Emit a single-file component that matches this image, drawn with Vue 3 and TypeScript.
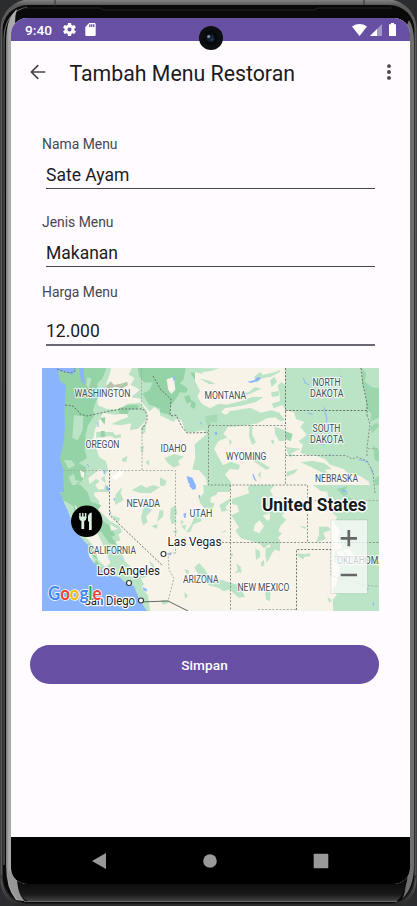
<script setup lang="ts">
import { ref } from 'vue'

interface Field { id: string; label: string; value: string }
interface MapLabel { text: string; x: number; y: number; w: number; kind: string }

const fields = ref<Field[]>([
  { id: 'nama', label: 'Nama Menu', value: 'Sate Ayam' },
  { id: 'jenis', label: 'Jenis Menu', value: 'Makanan' },
  { id: 'harga', label: 'Harga Menu', value: '12.000' },
])

const labels: MapLabel[] = [
  { text: 'WASHINGTON', x: 74.5, y: 397.3, w: 56, kind: 'state' },
  { text: 'OREGON', x: 85.5, y: 447.7, w: 34, kind: 'state' },
  { text: 'IDAHO', x: 160.5, y: 452.3, w: 26, kind: 'state' },
  { text: 'MONTANA', x: 204.5, y: 399.3, w: 41.5, kind: 'state' },
  { text: 'WYOMING', x: 226, y: 460.3, w: 40.5, kind: 'state' },
  { text: 'NORTH', x: 312.5, y: 386.2, w: 28, kind: 'state' },
  { text: 'DAKOTA', x: 310, y: 396.5, w: 33.5, kind: 'state' },
  { text: 'SOUTH', x: 312.5, y: 432.2, w: 28, kind: 'state' },
  { text: 'DAKOTA', x: 310, y: 442.5, w: 33.5, kind: 'state' },
  { text: 'NEBRASKA', x: 315, y: 482.3, w: 43, kind: 'state' },
  { text: 'NEVADA', x: 126.5, y: 507.3, w: 33.5, kind: 'state' },
  { text: 'CALIFORNIA', x: 88.5, y: 553.5, w: 47.5, kind: 'state' },
  { text: 'UTAH', x: 189.5, y: 517.3, w: 23, kind: 'state' },
  { text: 'ARIZONA', x: 183, y: 583.3, w: 35.5, kind: 'state' },
  { text: 'NEW MEXICO', x: 237.5, y: 591.3, w: 52, kind: 'state' },
  { text: 'OKLAHOMA', x: 337, y: 564.3, w: 47, kind: 'state' },
  { text: 'Las Vegas', x: 167.5, y: 546, w: 54, kind: 'city' },
  { text: 'Los Angeles', x: 97, y: 575, w: 63, kind: 'city' },
  { text: 'San Diego', x: 84, y: 605, w: 51, kind: 'city' },
  { text: 'United States', x: 262, y: 510.5, w: 104.5, kind: 'country' },
]
</script>

<template>
  <div class="stage">
    <svg class="device" viewBox="0 0 417 906" aria-hidden="true">
      <defs>
        <linearGradient id="rim" x1="0" y1="0" x2="0" y2="1">
          <stop offset="0" stop-color="#858585" /><stop offset=".006" stop-color="#5a5a5a" />
          <stop offset=".1" stop-color="#5c5c5c" /><stop offset=".97" stop-color="#555" /><stop offset="1" stop-color="#222" />
        </linearGradient>
        <linearGradient id="chin" x1="0" y1="884" x2="0" y2="902" gradientUnits="userSpaceOnUse">
          <stop offset="0" stop-color="#0d0d0d" /><stop offset=".6" stop-color="#1b1b1b" /><stop offset="1" stop-color="#4a4a4a" />
        </linearGradient>
        <linearGradient id="glow" x1="6" y1="0" x2="11" y2="0" gradientUnits="userSpaceOnUse">
          <stop offset="0" stop-color="#777" /><stop offset=".5" stop-color="#a5a5a5" /><stop offset="1" stop-color="#aaa" />
        </linearGradient>
      </defs>
      <rect width="417" height="906" fill="#2b2c2f" />
      <rect x=".5" y="-.5" width="416" height="910" rx="29" fill="url(#rim)" />
      <rect x="2.5" y="5" width="412" height="899" rx="25" fill="#090909" />
      <path d="M4 865V40Q4 12 27 7" fill="none" stroke="#777" stroke-width="1" />
      <path d="M55 0V6M364 0V5" stroke="#333" stroke-width="1" />
      <path d="M22 8H100L104 10H314L318 8H392" fill="none" stroke="#242424" stroke-width="1" />
      <path d="M17 9Q6 18 6 42V866Q6 888 16 900L24 901Q17 895 17 875V42Q13 21 17 9Z" fill="url(#glow)" />
      <path d="M409 20Q414 27 414 42V866Q414 888 402 899Q407 891 405 876V30Z" fill="#6f6f6f" />
      <path d="M13 872H408Q407 892 397 901H28Q15 896 13 872Z" fill="url(#chin)" />
      <path d="M17 875Q17 895 25 901L17 899Q8 889 7 870Z" fill="#969696" />
      <path d="M24 901.5H397" stroke="#686868" stroke-width="1.2" />
      <path d="M1 875Q5 900 25 904H394Q411 900 416 875" fill="none" stroke="#303030" stroke-width="1" />
    </svg>

    <div class="screen">
      <div class="status">
        <span class="clock">9:40</span>
        <svg class="gear" viewBox="2 2 20 20"><path fill="#fff" fill-rule="evenodd" d="M19.43 12.98c.04-.32.07-.64.07-.98s-.03-.66-.07-.98l2.11-1.65c.19-.15.24-.42.12-.64l-2-3.46c-.12-.22-.39-.3-.61-.22l-2.49 1c-.52-.4-1.08-.73-1.69-.98l-.38-2.65A.49.49 0 0014 2h-4c-.25 0-.46.18-.49.42l-.38 2.65c-.61.25-1.17.59-1.69.98l-2.49-1c-.23-.09-.49 0-.61.22l-2 3.46c-.13.22-.07.49.12.64l2.11 1.65c-.04.32-.07.65-.07.98s.03.66.07.98l-2.11 1.65c-.19.15-.24.42-.12.64l2 3.46c.12.22.39.3.61.22l2.49-1c.52.4 1.08.73 1.69.98l.38 2.65c.03.24.24.42.49.42h4c.25 0 .46-.18.49-.42l.38-2.65c.61-.25 1.17-.59 1.69-.98l2.49 1c.23.09.49 0 .61-.22l2-3.46c.12-.22.07-.49-.12-.64l-2.11-1.65zM12 15.2a3.2 3.2 0 110-6.4 3.2 3.2 0 010 6.4z" /></svg>
        <svg class="sd" viewBox="4 2 16 20"><path fill="#fff" fill-rule="evenodd" d="M18 2h-8L4 8v12c0 1.1.9 2 2 2h12c1.1 0 2-.9 2-2V4c0-1.100-.9-2-2-2zm-6 6h-2V4h2v4zm3 0h-2V4h2v4zm3 0h-2V4h2v4z" /></svg>
        <svg class="wifi" viewBox="0 0 15 12"><path d="M0 2.500Q7.500-2.400 15 2.500L7.500 12Z" fill="#fff" /></svg>
        <svg class="signal" viewBox="0 0 12 12"><path d="M12 0V12H0Z" fill="#fff" opacity=".4" /><path d="M7 5V12H0Z" fill="#fff" /></svg>
        <svg class="battery" viewBox="0 0 7 13"><path d="M2 0H5V1.300H7V13H0V1.300H2Z" fill="#fff" /></svg>
      </div>

      <header class="appbar">
        <svg class="back" viewBox="0 0 16 16"><path d="M15.200 8H1.500M8.300 1.100L1.400 8L8.300 14.900" fill="none" stroke="#49454f" stroke-width="1.700" /></svg>
        <h1>Tambah Menu Restoran</h1>
        <svg class="more" viewBox="0 0 4 16"><g fill="#49454f"><circle cx="2" cy="2.100" r="1.950" /><circle cx="2" cy="8" r="1.950" /><circle cx="2" cy="13.900" r="1.950" /></g></svg>
      </header>

      <main class="content">
        <div v-for="field in fields" :key="field.id" class="field" :class="field.id">
          <label :for="field.id">{{ field.label }}</label>
          <input :id="field.id" v-model="field.value" type="text" />
        </div>

        <svg class="map" viewBox="42 368 337 243">
          <rect x="42" y="368" width="337" height="243" fill="#f7f3e8" />
          <!-- Pacific north-west -->
          <g transform="translate(38 362) scale(.33333)">
            <path fill="#bbe3c6" d="M50 18H220L214 40L205 65L210 88L192 98L178 112L180 130L205 140L244 143L268 125L305 122L326 145L325 175L300 200L275 205L280 184L250 190L220 187L245 175L270 166L268 153L230 158L196 152L180 180L170 205L166 232L175 258L183 285L204 298L210 320L200 345L210 390H60Z" />
            <path fill="#94d3a6" d="M53 18H205L194 48L178 65L178 90L193 92L174 116L165 145L170 159L150 190L142 220L140 263L147 288L122 304L145 316L142 345L122 366L100 390H70L65 290Z" />
            <path fill="#bbe3c6" d="M108 160L136 163L134 205L119 235L103 228ZM78 295L100 295L112 310L92 320ZM148 45L160 51L151 82L145 68ZM92 345L108 335L112 354L126 358L105 376Z" />
            <path fill="#f7f3e8" d="M151 348L188 320L202 340L190 348L195 366L175 350L155 366ZM126 324L140 332L138 350L129 343ZM190 113L225 120L250 108L268 113L240 134L206 126Z" />
            <path fill="#bbe3c6" d="M282 18H376V158L350 135L335 148L315 125L307 110L280 105L306 83L278 68L290 48L272 38ZM175 210H224L232 220L249 217L249 226L232 230L218 222L174 227ZM252 290L268 281L265 300L252 298ZM309 195L325 183L322 210L311 220ZM306 255L318 251L314 278ZM322 300L334 294L333 311Z" />
            <path fill="#94d3a6" d="M300 18H376V145L354 135L333 128L314 95L335 83L344 61L320 62L303 42ZM242 139L276 128L302 130L300 141L273 144L269 157L244 155ZM186 169L202 165L200 188L194 180ZM188 207L200 207L201 225L188 226Z" />
            <path fill="#b0c9ac" d="M203 75L218 58L228 69L248 65L268 59L270 69L253 79L230 74L214 82Z" />
          </g>
          <!-- Northern Rockies -->
          <g transform="translate(160 362) scale(.33333)">
            <path fill="#bbe3c6" d="M0 18H115L130 36L105 31L104 55L120 86L112 104L126 126L150 139L177 125L200 128L242 118L277 105L310 105L288 120L243 131L194 139L184 150L195 158L240 142L272 138L302 152L335 145L360 153V165L322 168L293 184L248 191L204 195L190 216L202 226L175 238L162 260L180 294L189 310L213 299L240 309L236 323L210 321L195 338L213 360L210 390H147L136 345L117 325L97 323L106 286L104 247L140 216L132 205L80 213L65 188L33 176L0 160Z" />
            <path fill="#94d3a6" d="M0 18H77L71 52L60 64L83 79L80 92L60 91L48 110L29 135L31 159L0 151ZM91 32H105V55ZM72 104L88 99L95 119L80 124ZM94 114L108 124L103 141L92 134Z" />
            <path fill="#a6dab4" d="M135 163L173 157L171 181L150 180L154 192L140 188Z" />
            <path fill="#f7f3e8" d="M20 52L42 45L46 83L34 96L24 82ZM45 172L64 174L72 196L57 210L38 194Z" />
            <path fill="#bbe3c6" d="M104 19H178L152 27L127 31ZM119 50L150 57L167 67L147 66ZM225 99L267 90L285 75L303 80L276 93L238 107ZM283 44L300 29L308 39L344 31L360 24V30L332 44L306 49L288 63ZM207 148L230 144L224 160L203 171ZM269 183L278 194L276 216L288 241L276 249L267 221ZM206 231L216 239L210 250ZM13 289L42 276L72 284L54 297L60 308L41 317L23 302ZM265 277L300 282L294 295L331 318L318 323L278 296ZM293 339L303 327L301 349ZM0 346L20 357L14 372L0 371Z" />
            <path fill="#8ab5fe" d="M38 42L47 48L41 58ZM262 59L282 55L294 44L303 48L295 56L272 63ZM80 342L97 347L108 371L103 382L85 362ZM164 211L171 209V220L164 216ZM120 177L126 185L123 188ZM277 335L281 337L286 350L291 356L285 356L280 347Z" />
          </g>
          <!-- Plains -->
          <g transform="translate(270 362) scale(.33333)">
            <path fill="#bbe3c6" d="M46 18H328V390H310L295 358L266 340H239L220 320L180 308L166 292L135 280H112L91 272L99 249L86 238L110 218L91 195L103 180L78 171L72 150L49 145L36 129L12 139L5 125L30 117L29 95L23 70L35 60L46 70Z" />
            <path fill="#bbe3c6" d="M0 55L13 44L21 60L5 75ZM2 92L25 86L28 101L7 105Z" />
            <path fill="#9cd6ad" d="M276 18L289 35L284 58L304 75L328 80V166L300 180L304 155L290 140L287 95L277 66ZM329 190L307 214L300 196L318 182ZM44 207L68 215L62 238L45 230ZM308 250L328 267V300L314 294ZM314 350L328 340V390H318Z" />
            <path fill="#bbe3c6" d="M12 151L32 158L45 174L33 178L20 170ZM14 194L45 205L43 237L28 237L15 215ZM47 255L91 260L60 276L80 279L58 285ZM50 330L83 320L75 333L50 344ZM92 301L127 296L163 304L185 320L165 323L173 333L211 342L202 352L179 349L153 330L125 316ZM2 235L12 235L10 250Z" />
            <path fill="none" stroke="#8ab5fe" stroke-width="3" d="M100 48L106 64L117 68M161 136L166 145L165 155M167 154L171 175L167 181M113 153L128 157M209 42L215 44M151 246L163 248M177 276L184 280M266 293L282 296L295 302M301 314L308 334M199 383L214 380L237 376" />
          </g>
          <!-- California and Nevada -->
          <g transform="translate(38 485) scale(.33333)">
            <path fill="#bbe3c6" d="M65 0H171L169 32L184 49L180 72L204 97L220 111L243 122L252 140L240 150L248 166L230 172L250 194L260 228L290 257L303 269L318 298L310 308L330 331L336 378H305L275 310L220 285L180 258L150 190L115 145L70 50Z" />
            <path fill="#94d3a6" d="M65 0H128L150 23L157 50L190 61L177 77L190 105L213 120L232 151L220 155L238 180L214 175L190 141L160 130L140 105L114 108L106 63L70 42ZM151 174L170 196L177 222L160 209ZM175 226L192 249L188 260L165 239ZM278 248L290 256L289 276Z" />
            <path fill="#f7f3e8" d="M110 57L125 84L142 110L156 137L179 148L193 174L207 211L218 233L203 247L181 225L170 186L146 160L127 137ZM171 0L190 -15L204 -6L198 12L182 14ZM216 118L240 132L219 137Z" />
            <path fill="#bbe3c6" d="M233 28L252 7L248 25L257 45L231 60ZM281 16L309 0L325 8L346 0L366 7L337 25L306 23ZM314 75L327 60L342 75L324 94L329 111L315 121L309 98ZM365 76H376V94L357 111ZM340 123L359 117L357 132ZM333 228L345 236L351 253L342 246ZM303 272H331L312 280ZM218 89L246 100L240 115Z" />
            <path fill="#8ab5fe" d="M207 1L214 11L211 20L204 10ZM225 41L232 39L231 49ZM216 79L220 81L218 92ZM314 306L326 312L327 320L316 315Z" />
            <path fill="#fffef9" d="M221 -25L240 -39L244 -46L264 -47L250 -28L232 -14Z" />
          </g>
          <!-- Southwest -->
          <g transform="translate(160 485) scale(.33333)">
            <path fill="#bbe3c6" d="M129 0H205L179 9L169 29L153 36L151 52L163 55L158 73L132 70L120 53L117 38L132 24ZM268 0H345L330 15L342 40V66L342 68L344 92L331 108L350 124L348 153L360 165V199L338 192L333 175L311 190L300 177L273 168L243 160L226 137L237 126L226 110L214 91L237 80L232 61L216 57L216 42L240 34L268 25L263 11ZM32 70L47 60L52 86L44 93L50 112L35 118L30 98ZM106 85L124 89L124 109L100 118L91 141L78 142L95 118ZM64 122L78 120L75 137ZM37 138L53 135L49 148ZM103 247L117 234L137 256L149 283L168 292L184 284L210 293L249 303L244 324L207 314L191 319L174 308L144 300L132 278L112 264ZM232 249L246 254L241 266ZM228 235L243 246L241 260L224 265L234 253ZM304 230L312 225L313 241L303 246ZM286 191L299 197L301 215L288 225ZM317 188L339 187L335 207L320 234L316 210ZM315 318L332 316L330 348L318 344ZM224 312L248 321L255 336L236 338L213 318ZM72 253L87 256L85 272ZM73 320L84 332L75 341ZM2 344L28 347L25 354L8 359ZM62 103L71 112L63 120ZM212 204L220 207L214 219ZM178 60L212 40L210 50L196 68L205 76L185 80ZM182 142L199 135L195 142Z" />
            <path fill="#f7f3e8" d="M285 118L299 106L312 124L298 144L280 138ZM308 91L328 85L337 96L322 108Z" />
            <path fill="#8ab5fe" d="M87 0L108 -1L107 12L98 14L89 4ZM70 86L79 83L77 98L72 98ZM116 30H120V40H116ZM25 206L33 203L33 211L25 210Z" />
          </g>
          <!-- Southern plains -->
          <g transform="translate(270 485) scale(.33333)">
            <path fill="#bbe3c6" d="M128 0H328V378H190L188 345L201 329L184 316L198 302L210 250L190 225L196 197L216 189L204 157L211 136L191 116L202 96L187 84L196 56L175 45L172 20L153 18ZM0 65L22 82L44 80L36 94L49 104L31 123L25 139L36 145L14 170L20 189L0 211ZM88 123L110 126L105 132ZM147 125L174 125L182 135L160 143L167 163L138 172L147 150ZM82 205L104 208L119 204L121 214L104 215L100 223L86 216ZM172 337L186 345L178 354Z" />
            <path fill="#9cd6ad" d="M200 12L232 4L222 24L235 27L220 32ZM227 32L248 44L249 56L230 50ZM285 67L294 78L284 78Z" />
            <path fill="#f7f3e8" d="M216 196L238 190L255 215L240 212ZM198 200L214 196L238 225L225 228Z" />
            <path fill="#8ab5fe" d="M307 351L313 355L310 365ZM286 310L297 311L293 316ZM215 10L234 22L229 24L216 16Z" />
          </g>

          <path fill="#8ab5fe" d="M42 368H57L60 381L65.700 385L64.500 412L65 426L64 440L60 459L63 469L64 492L60 492L65 505L68 511L71 520L78 534L84 541L88 545L89 556L97 567L108 575L119 577L126 583L134 586L139 599L147 611H42Z" />
          <path fill="#8ab5fe" d="M57 368H75V372L72 375L67 372L58 371ZM79 368H84V376L85 385L81 381Z" />
          <path fill="none" stroke="#8ab5fe" stroke-width="1" d="M98 422V427M87 464L89 467M105 470L104 474" />

          <g class="borders">
            <path d="M57 369L65 372L71 373L75 371V368M65 405L73 406L78 411L80 414L87 416L96 414L110 411L121 409H143L147 414L147 421L141 431" />
            <path d="M63 470.500H175.500V553M141.500 368V409M142 432V470" class="light" />
            <path d="M109.500 470V515L163 566M153 376L161 390L171 399L170 415L173 416L176 415L182 427L187 433L208 432.500M285.500 368V425M285.500 410.500H367M361 368L363 385L367 403L367 415" />
            <path d="M208.500 426V485H307.500V542.500H379M208.500 425.500H285.500V485M285.500 455.500H346L352 459L357 457L367 461L373 472L375 493M367 415L370 424L367 448V456M230.500 485V611M222 542.500H307" class="mid" />
            <path d="M368 448.500H379M175.500 553H168L169 570L174 578L168 601M331 549V575L340 579L349 580L356 582L363 585L373 586H379M258 609.500H296M307.500 500.500H379" class="light" />
            <path d="M296.500 610V549.500H331" />
            <path class="solid" d="M140 602L168 601L188 611" />
          </g>

          <g class="places"><circle cx="163.500" cy="554" r="2.500" /><circle cx="129" cy="583" r="2.500" /><circle cx="141" cy="600.500" r="2.500" /></g>
          <text v-for="(item, index) in labels" :key="index" :class="item.kind" :x="item.x" :y="item.y" :textLength="item.w" lengthAdjust="spacingAndGlyphs">{{ item.text }}</text>

          <g class="marker">
            <circle cx="86.700" cy="521.300" r="15.700" fill="#000" />
            <path d="M80 513V518M82.800 513V518M85.600 513V518" stroke="#d9f0df" stroke-width="1.500" />
            <path fill="#d9f0df" d="M79.200 516.500H86.400Q86.600 520.500 84.200 521V529H81.400V521Q79 520.500 79.200 516.500ZM88 517Q88 513 91.700 512.500V530H89V521.500H88Z" />
          </g>

          <g class="zoom">
            <rect x="331" y="520" width="36.500" height="73.500" fill="#fff" fill-opacity=".7" stroke="#000" stroke-opacity=".09" />
            <path d="M334 556.500H364" stroke="#ddd" stroke-width=".7" />
            <path d="M340.700 538.300H357M348.800 530V546.300M340.700 575H357" stroke="#666" stroke-width="2.700" />
          </g>

          <text class="google" x="48" y="600" textLength="53.500" lengthAdjust="spacingAndGlyphs"><tspan fill="#4285f4">G</tspan><tspan fill="#ea4335">o</tspan><tspan fill="#fbbc04">o</tspan><tspan fill="#4285f4">g</tspan><tspan fill="#34a853">l</tspan><tspan fill="#ea4335">e</tspan></text>
        </svg>

        <button class="save" type="button">Simpan</button>
      </main>

      <nav class="navbar">
        <svg viewBox="0 0 16 16"><path d="M1 8L15 0V16Z" fill="#999" /></svg>
        <svg viewBox="0 0 16 16"><circle cx="8" cy="8" r="6.800" fill="#999" /></svg>
        <svg viewBox="0 0 16 16"><rect x=".7" y=".7" width="14.600" height="14.600" rx=".7" fill="#999" /></svg>
      </nav>
    </div>

    <svg class="camera" viewBox="0 0 24 24"><circle cx="12" cy="12" r="12" fill="#0d0e0f" /><circle cx="12" cy="12" r="7.500" fill="#08090c" /><circle cx="11.500" cy="12" r="4" fill="#14202f" /><circle cx="9.700" cy="10.500" r="1.500" fill="#8194a2" /><circle cx="13" cy="13.500" r="1.500" fill="#1d3d63" /></svg>
  </div>
</template>

<style>
body { margin: 0; background: #2b2c2f; overflow: hidden; }
</style>

<style scoped>
.stage { position: relative; box-sizing: border-box; width: 417px; height: 906px; padding: 18px 7px 22px 11px; font-family: Roboto, "Liberation Sans", sans-serif; }
.device { position: absolute; inset: 0; width: 417px; height: 906px; }
svg { display: block; flex: none; }
.screen { position: relative; display: flex; flex-direction: column; width: 399px; height: 866px; overflow: hidden; border-radius: 16px; background: #fffbff; }
.status { display: flex; align-items: center; height: 23px; flex: none; padding: 0 14px 0 14px; background: #6750a4; color: #fff; box-sizing: border-box; }
.clock { width: 37.500px; font-size: 13.700px; font-weight: 500; line-height: 23px; padding-top: 1px; }
.gear { width: 13px; height: 13px; margin-right: 9.500px; }
.sd { width: 11px; height: 13px; }
.wifi { width: 15px; height: 12px; margin-left: auto; margin-right: 3px; }
.signal { width: 12px; height: 12px; margin-right: 7.500px; }
.battery { width: 7px; height: 13px; }
.appbar { display: flex; align-items: center; height: 62px; flex: none; padding: 0 19px 0 18.500px; }
.back { width: 16px; height: 16px; }
.appbar h1 { flex: 1; margin: 4px 0 0 24px; font-size: 21.300px; line-height: 28px; font-weight: 400; color: #1c1b1f; white-space: nowrap; }
.more { width: 4px; height: 16px; margin-right: .500px; }
.content { display: flex; flex-direction: column; flex: 1; padding: 31px 31px 0; }
.field { display: flex; flex-direction: column; height: 78px; }
.field label { height: 20px; box-sizing: border-box; font-size: 13.900px; line-height: 21px; color: #49454f; }
.field input { width: 329px; height: 35px; margin: 0 0 0 4px; padding: 8px 0 0; box-sizing: border-box; border: 0; border-bottom: 1px solid #49454f; border-radius: 0; outline: 0; background: transparent; color: #1c1b1f; font: 400 17.500px/26px Roboto, sans-serif; }
.jenis { height: 70px; }
.harga { height: 86px; }
.harga input { height: 44px; padding-top: 15px; border-bottom: 2px solid #6c6675; }
.map { width: 337px; height: 243px; overflow: hidden; }
.borders path { fill: none; stroke: #5d6664; stroke-width: .9; stroke-dasharray: 2 1.600; }
.borders .mid { stroke: #7c8782; }
.borders .light { stroke: #a0a9a1; }
.borders .solid { stroke: #525858; stroke-dasharray: none; }
.places circle { fill: #fff; stroke: #333; stroke-width: 1.100; }
.map text { paint-order: stroke; stroke: #fff; stroke-linejoin: round; }
.map .state { font-size: 10.300px; fill: #46505a; stroke-width: 2.500px; stroke-opacity: .75; }
.map .city { font-size: 12.600px; fill: #202124; stroke-width: 2.500px; }
.map .country { font-size: 18px; font-weight: 700; fill: #171a1d; stroke-width: 3px; }
.map .google { font-family: Lato, sans-serif; font-size: 19px; font-weight: 700; stroke-width: 1.500px; }
.save { width: 349px; height: 39px; margin: 34px 0 0 -12px; padding: 1px 0 0; border: 0; border-radius: 20px; background: #6750a4; color: #fff; font: 500 13.600px/20px Roboto, sans-serif; letter-spacing: .1px; }
.navbar { display: flex; align-items: center; justify-content: space-between; height: 47px; flex: none; box-sizing: border-box; padding: 0 81px 0 80px; background: #000; }
.navbar svg { width: 16px; height: 16px; }
.camera { position: absolute; left: 199px; top: 26px; width: 24px; height: 24px; }
</style>
